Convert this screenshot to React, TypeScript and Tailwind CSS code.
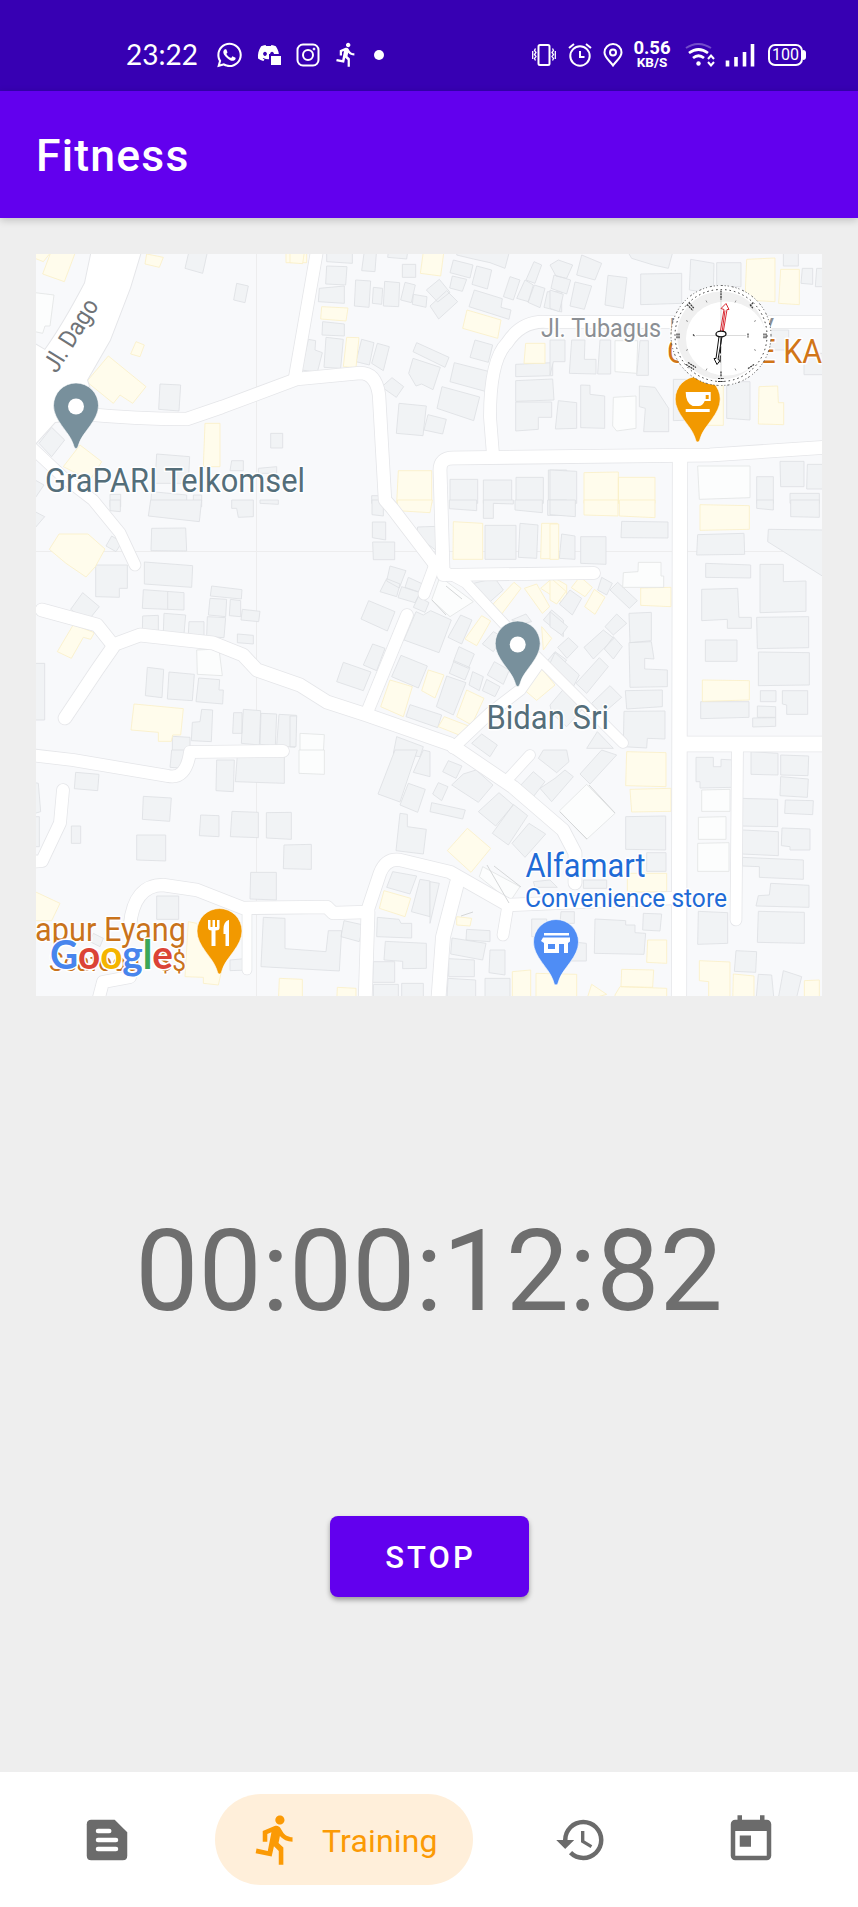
import React from "react";
import { FaWhatsapp, FaDiscord } from "react-icons/fa";
import { MdDirectionsRun, MdHistory, MdToday } from "react-icons/md";

type Tile = { x: number; y: number; gray: string; yellow: string; white?: string };

// Building footprints, grouped by map tile; tile units are a third of a pixel.
const tiles: Tile[] = [
  {
    x: 30, y: 250,
    gray: "M478 0L465 55L518 70L531 12V0Z M620 100L611 150L645 158L655 108Z M390 402L386 478L447 483L452 405Z M65 532L27 580L65 620L104 570Z M722 550H758V594H722Z M380 612L375 700H475L479 620Z M605 632L600 662H640V632Z M685 655L740 650V670H685Z M240 733H272V770H240Z M365 725L360 780H470V735Z M490 735H515V770H490Z M15 690L42 705L15 745Z",
    yellow: "M65 0L38 72L103 95L135 10V0Z M15 10H60L40 35L15 25Z M350 12L345 42L388 52L400 22Z M768 0V38H830V0Z M318 275L302 312L330 320L343 285Z M235 318L170 395L250 460L270 435L308 460L348 410Z M525 520H570V650H520Z M150 585L100 650L180 690L215 635Z",
    white: "M15 128L72 135L60 228H45L38 250L15 245Z",
  },
  {
    x: 290, y: 250,
    gray: "M110 0V35L187 40V0Z M110 48L107 102L167 105L171 50Z M88 115L85 155L163 160V108Z M98 215L96 255L163 258V222Z M55 268L35 360L82 367L97 308L75 300L77 272Z M108 262L102 352L152 355L160 268Z M215 268L198 335L238 345L252 278Z M262 280L245 340L280 362L298 290Z M197 90L193 168L237 172L242 93Z M250 112L247 160L275 163L278 115Z M284 94L280 168L326 170L329 98Z M345 97L332 150L364 158L376 105Z M370 133L367 163L408 172L411 140Z M337 43H377V82H337Z M222 10L215 62L255 65L259 10Z M295 5L293 22L350 27L353 5Z M448 88L409 120L443 156L480 127Z M470 122L420 168L446 207L503 155Z M490 30L480 68L540 84L549 45Z M487 78L479 114L517 124L530 88Z M560 48L546 103L592 117L605 60Z M553 120L537 170L657 208L663 180L633 172L637 146Z M555 270L540 322L595 337L608 285Z M380 278L369 305L465 352L477 322Z M369 325L356 370L378 408L395 402L429 419L451 352Z M493 338L480 395L600 428L610 368Z M456 410L441 475L551 512L569 441Z M306 383L275 411L319 442L341 410Z M327 460L319 550L399 557L409 468Z M414 494L402 540L458 552L469 508Z M660 80L640 140L670 150L690 90Z M705 90L680 145L715 155L730 105Z M732 35L708 90L735 100L755 45Z M733 105L714 157L750 173L765 115Z M772 125L762 172L815 186V125Z M505 0L500 15L550 27L600 38L645 55L657 10V0Z M677 343L788 338V377L677 380Z M677 392L788 387L792 450L677 454Z M677 456H785V502H745V538L677 543Z M480 688H563V760H480Z M580 690H665V760H580Z M678 682H760V760H678Z M245 737H280V760H245Z M775 660H830V750H775Z",
    yellow: "M0 0V38L38 41L44 0Z M95 170L92 207L168 213L174 174Z M170 262L160 350L198 353L207 263Z M400 5L391 70L452 78L461 10Z M531 180L518 235L623 265L633 210Z M707 280H765V340H702Z M325 662H425V760H320Z",
  },
  {
    x: 550, y: 250,
    gray: "M0 45L25 30L68 45L50 85L18 78Z M12 75L62 90L50 132L3 115Z M0 120L40 133L28 185L0 175Z M75 96L125 108L103 178L60 168Z M95 15L155 40L135 90L80 75Z M230 0H370L355 55L310 45L245 25Z M174 76L165 165L220 175L231 83Z M272 72L395 70V160L272 164Z M422 28L492 40L490 130L418 120Z M500 38H573V110H500Z M700 0V48H745V0Z M757 55H788V103L753 100Z M800 55H830V110H796Z M0 270H45V335H10L0 375Z M65 270H105L103 328H138V372L58 370Z M150 270H182V372H143Z M270 272H295V376H260Z M25 452L80 458V535L16 537Z M92 405L120 406V433L164 438V535L92 533Z M268 408L315 412L356 475V545H281L286 475L268 470Z M370 388H420L430 510L370 512Z M530 395H600V510L530 505Z M660 240H716V300H660Z M762 310H830V374H762Z M690 634H762V710H692Z M772 643H830V717H770Z M720 730H808V760H720Z M620 680H670V760H620Z M0 660L80 664V760H0Z",
    yellow: "M590 28L675 24V155L585 150Z M692 58H748V164L686 160Z M627 410L683 408L685 458H701V524L625 522Z M490 388H520V526H470Z M102 668L205 666V760H102Z M205 682H315V760H205Z",
    white: "M195 272H263L260 370L195 365Z M190 442L258 438V535L200 543L188 528Z M443 648H600V743L448 748Z",
  },
  {
    x: 30, y: 500,
    gray: "M362 0L355 48L508 65L515 0Z M240 0V32L271 35V0Z M605 0V25H620L625 52L670 50V0Z M690 0V10L745 13V0Z M245 108L228 138L258 155L276 127Z M365 85L467 84L470 153L363 152Z M197 195H292V265H268V292L197 290Z M343 186L488 197L485 262L343 252Z M340 269L462 278V330L337 325Z M413 275V327 M338 348L385 346V397L337 395Z M402 340L467 345L462 402L400 397Z M477 365H522V408L475 402Z M532 350L587 353L582 413L530 410Z M545 258L636 269L634 297L541 288Z M540 295L590 298L587 350L535 345Z M601 298L632 302V350L598 347Z M637 328L690 334L686 365L633 360Z M622 402L670 406V432L622 428Z M158 278L122 328L172 365L208 320Z M352 502L401 508L396 593L346 587Z M417 516L493 523L487 602L412 597Z M506 534L569 539L567 570H580L578 612L498 605Z M515 628L548 630L544 725L484 722L487 667L510 665Z M427 709L480 712V760H427Z M611 638H636V700H608Z M640 628L692 632L688 735L634 730Z M693 640L740 642L736 738L690 733Z M747 643L800 646L795 742L740 737Z M15 490H44V660H15Z M15 35L44 50L15 84Z",
    yellow: "M87 102H174L225 147L196 200L168 231L108 190L58 148Z M130 374L193 398L182 418L160 412L124 475L82 455Z M312 612L460 626L452 705H428L424 724H385V697L303 690Z",
    white: "M500 450L567 447L577 527L502 523Z",
  },
  {
    x: 290, y: 500,
    gray: "M246 0H280V48L246 44Z M247 66H287V120L247 113Z M248 126H314V179H250Z M383 81L443 79V155L380 107Z M478 0H560V32L478 26Z M580 0H670V12L610 10V55H580Z M675 0H757V38L675 30Z M585 76H678V178H585Z M690 70L744 75L740 175L685 172Z M773 0H830V46H773Z M300 198L348 212L328 264L290 243Z M290 236L330 252L320 290L270 275Z M355 232L398 252L385 275L345 262Z M335 260L390 278L375 308L324 293Z M385 290L417 308L405 337L370 322Z M236 302L315 335L292 393L213 357Z M248 432L285 445L260 512L220 495Z M160 487L243 516L220 572L140 545Z M378 335L400 345L422 332L484 360L447 458L342 420Z M333 466L412 498L385 564L305 530Z M512 345L546 360L515 432L474 412Z M507 440L553 462L535 505L490 485Z M492 482L540 503L525 540L478 520Z M548 515L580 530L568 572L537 555Z M590 538L630 560L615 590L577 572Z M470 528L528 548L490 645L439 620Z M360 614L455 645L443 683L348 650Z M610 395L640 412L610 455L577 432Z M613 485L658 510L640 553L592 525Z M550 250L615 235L640 270L597 308Z M665 360L708 342L725 365L700 370Z M785 330L820 360V410L760 360Z M795 455L830 480L800 515L770 485Z M575 702L622 735L600 770L545 730Z M320 710L400 740L390 770L310 760Z M0 648H20L18 740H0Z",
    yellow: "M322 0V32L420 38L427 0Z M490 65L578 70V178H489Z M755 70H802V176H752Z M575 347L602 363L560 437L525 417Z M415 510L462 525L435 594L395 572Z M300 540L367 560L340 650L272 620Z M530 570L582 595L545 675L500 650Z M463 650L551 684L540 718L445 680Z M672 247L693 265L635 342L602 320Z M740 252L779 320L757 340L703 265Z M790 232L830 255V315L752 265Z M750 500L795 555L740 601L695 563Z M755 380L785 415L760 450Z",
    white: "M450 230L550 305L480 350L425 300Z M30 700L103 704L100 760H30Z",
  },
  {
    x: 550, y: 500,
    gray: "M0 0H76V50L0 44Z M35 102L75 108V178L28 175Z M92 110H168V193L92 190Z M215 64L354 66V114L213 113Z M443 104L582 100L584 163L440 165Z M620 0H670V30L620 25Z M722 0H808V52L722 50Z M655 88L820 90V230L653 125Z M467 190L602 195V234L467 232Z M630 193H700V245L768 243V334L630 338Z M455 268L563 265L567 352H604V385H532V358L455 362Z M620 352L776 350V443L622 446Z M625 456L778 458V555L625 557Z M466 420H561V484H466Z M631 572H678V605H631Z M697 572H773V643H710V615L697 612Z M622 618L677 620V652H622Z M608 654L677 653V679L608 681Z M452 605H597V652L452 656Z M237 340L304 337V422L240 428Z M237 428L304 425L312 477L284 475V507L352 510V560L240 562Z M226 572L337 570V620L230 627Z M222 634L345 633V717L292 715L290 744L220 740Z M155 232L187 250L170 285L143 270Z M203 247L262 302L238 325L180 270Z M60 270L95 295L67 345L28 312Z M0 335L53 380L35 405L0 380Z M55 413L84 440L51 475L23 442Z M160 390L192 415L130 477L102 442Z M200 342L230 370L190 405L165 380Z M190 410L217 440L190 477L163 447Z M15 458L88 525L70 560L0 490Z M148 473L175 500L110 580L78 550Z M180 557L215 592L155 644L125 610Z M142 695L190 745H110Z M0 615L40 568L95 630L50 680L5 640Z",
    yellow: "M0 72H26V178H0Z M102 0V45L204 48V0Z M208 0V48L315 53V0Z M450 14L598 17V88L450 91Z M272 264L363 262V320L272 316Z M90 230L127 262L105 290L64 263Z M133 268L165 292L135 343L104 320Z M457 540L598 542V600L457 604Z M0 232L48 274L20 312L0 300Z",
    white: "M265 187H333V228H341V262H218L220 218L264 215Z",
  },
  {
    x: 30, y: 750,
    gray: "M425 0L420 52L467 55L475 0Z M137 67L207 73L203 122L133 116Z M340 139L424 144L419 214L337 208Z M512 195L567 197V260L508 257Z M606 184L685 187V263L601 260Z M709 188L784 187V268L709 264Z M320 255H407V333L320 330Z M762 285L844 283V358L760 356Z M662 367H739V450L660 447Z M560 30H613L610 125L558 122Z M622 15L763 20V100L616 95Z M124 228H152V280H124Z M380 438H446V508H380Z M700 502L765 505V596L888 605L895 542H935L928 663L693 650Z M942 512L1000 525L988 575L933 560Z M1095 0L1044 132L1110 156L1162 0Z M1135 100L1186 118L1163 187L1110 165Z M1110 190L1132 193V230L1189 238L1180 312L1098 302Z M1088 365L1160 378L1140 432L1070 412Z M1170 388L1200 393V500L1144 485Z M1042 502L1107 508L1113 520H1145V564L1040 560Z M1066 574L1189 580V655L1118 656V634L1062 630Z M1030 635H1094V697H1028Z M1030 703H1105V760H1030Z M1115 700H1180V760H1115Z M1180 0L1200 5V80L1150 67Z M15 98L25 100L32 185L15 190Z M15 200H28V290H15Z M190 550L220 565L210 590L180 575Z M600 630L655 625V660L600 662Z",
    yellow: "M15 425L90 460L65 512H15Z M500 520L540 620L574 665L565 705L520 700V682L465 680L475 515Z M1062 422L1142 445L1125 500L1048 475Z M748 685L817 688V760H745Z M922 712L978 715V760H920Z",
    white: "M807 0V70L883 73V0Z",
  },
  {
    x: 430, y: 750,
    gray: "M340 0H410L417 35L380 68L325 25Z M310 65L345 95L310 140L268 110Z M405 60L430 80L365 155L330 115L375 85Z M515 0L560 15L480 102L450 72Z M55 32L96 48L78 85L38 65Z M100 72L138 60L189 105L145 157L65 105Z M25 98L54 110L35 152L8 132Z M5 158L106 180L98 207L0 185Z M207 128L250 165L197 228L145 185Z M250 163L293 197L235 285L187 250Z M297 220L347 252L285 322L246 280Z M587 200L707 198V300L587 298Z M650 308H708V364H650Z M495 507L587 512V525H615V548L647 550L642 613L493 610Z M640 490L695 492L690 543L638 540Z M805 484L893 488V580L803 583Z M798 22H850V50H873V28L912 30L908 112L810 114V95H798Z M963 5L1044 10V75L963 73Z M1052 15L1136 18L1134 77L1052 75Z M1052 80L1135 87L1132 142L1050 137Z M930 145L1043 148V230L930 228Z M1066 150L1150 152L1148 194L1064 190Z M937 240L1045 245V317L935 312Z M1056 234L1140 237V300H1080V290L1054 287Z M937 322L1120 330V388L988 382V350L937 348Z M1022 400L1137 406V472L978 468L985 437L1018 435Z M985 484L1123 487V580L982 577Z M918 602L980 605L977 667L913 664Z M985 673L1025 675L1032 750H978Z M1060 662L1115 680L1098 750H1044Z M66 564L168 580L158 630L62 612Z M110 538L180 542V575L108 570Z M56 626L133 630V680H56Z M180 600H225V675L177 668Z M54 685L137 690V760H50Z M165 685H240V760H165Z M305 507H350V560H305Z M393 485H433V520H390Z M440 577L469 580V633H420Z M0 395L28 400L0 520Z M310 395L360 390L382 412H315Z M460 390H530V415H460Z",
    yellow: "M590 5L708 8V110L587 107Z M600 118L723 115V184L605 186Z M112 235L182 295L123 367L52 302Z M653 570H710V640L650 637Z M575 658L671 660L668 712L573 710Z M808 632L900 636V760H836V695L808 692Z M910 672L972 678V760H908Z M247 665L302 660V760H247Z M318 670L440 673V760H318Z M485 703L530 733L470 750Z M1123 692L1168 690V760H1123Z M592 370H710V425H592Z M555 735L570 710L710 715V750H555Z M80 500L125 505L120 528L80 525Z",
    white: "M470 103L555 190L470 268L388 183Z M815 120L900 118V184H815Z M805 202L888 200V268H805Z M803 280L897 278V364H803Z M158 350L270 410L240 455L148 380Z",
  },
];

// Street centre lines: [path, width].
const roads: [string, number][] = [
  ["M84 414Q135 419 187 419L222 407L297 379L360 373Q376 373 379 395L385 500L392 508L437 567", 12.5],
  ["M318 245L295 377", 12],
  ["M437 567L466 583L507 627L540 660L583 703L623 743", 10],
  ["M443 570L440 470Q440 458 453 458L710 455L830 447", 13],
  ["M493 455L490 417Q490 360 507 343Q522 320 547 322L830 322", 12],
  ["M443 575L594 573", 12],
  ["M434 567L424 594", 11],
  ["M407 615L368 710", 12],
  ["M42 610L97 625L113 645L140 635L213 643L243 655L257 670L300 685L327 702L367 715L450 744L513 787L563 830L575 853V883", 13],
  ["M113 647L97 670L65 718", 13],
  ["M30 446L63 477L93 500L120 533L135 565", 11],
  ["M453 748L490 713L520 690L539 663", 11],
  ["M680 460L679 1005", 14.5],
  ["M684 744L830 744", 15],
  ["M737.5 745L736 920", 11],
  ["M30 755L73 760L168 776Q186 780 190 752L283 751", 12],
  ["M63 790L60 823L42 861L28 862", 12],
  ["M130 925Q134 885 163 885L197 890L243 908L327 907L333 913L367 912L380 873Q386 858 400 860L450 872L508 905L675 898", 12.5],
  ["M368 912L365 1005", 13],
  ["M247 913L247 970", 9],
  ["M130 977L103 982L97 1005", 12],
  ["M457 883L443 937L438 1005", 14],
  ["M508 905L503 935", 11],
  ["M530 755L508 779", 10],
];

const DAGO = "M93 245L85 283Q63 325 45 350L28 340V446L36 443L55 422L95 418L96 408L87 380L110 340L130 288L143 245Z";

const GRAY = "#f1f3f5";

function Pin({ x, y, color, children }: { x: number; y: number; color: string; children: React.ReactNode }) {
  return (
    <g transform={`translate(${x} ${y})`}>
      <path d="M0 43C-1.6 43-2 41-3 38C-7 26-22.5 15-22.5 0A22.5 22.5 0 1 1 22.5 0C22.5 15 7 26 3 38C2 41 1.6 43 0 43Z" fill={color} stroke="#fff" strokeOpacity=".6" strokeWidth="1" />
      {children}
    </g>
  );
}

function Compass() {
  return (
    <g transform="translate(721 335.5)">
      <circle r="50" fill="#fff" />
      <circle r="44" fill="#f0f0f0" />
      <ellipse cx="5" cy="3" rx="40" ry="37" fill="#fff" />
      <circle r="50" fill="none" stroke="#555" strokeWidth="1" strokeDasharray="1 3 2 2 1 2" />
      <circle r="46" fill="none" stroke="#333" strokeWidth="1" strokeDasharray="1.5 3" />
      <path d="M-25 0H25M0-44V44" stroke="#ccc" strokeWidth=".7" />
      <path d="M0-45v9M0 36v5M-3 43H3M-3 46H3M-44-2v5M-42-2v5M43-2v5M45-2v5M-34-31l6 6M-32-33l5 6M29-31l3 4M32-33l-3 4M-35 29l8 5M-33 27l8 5M27 33l6-4M-28-1l2 2M27-2v4" fill="none" stroke="#333" strokeWidth="1.2" strokeDasharray="2 .7" />
      <path d="M-15-35l1 2M15-35l-1 2M-35-15l2 1M35-15l-2 1M-35 15l2-1M35 15l-2-1M-15 35l1-2M15 35l-1-2" stroke="#999" />
      <path d="M-1-2L3-26L0-27L5-32L8-26L6-26L2-2Z" fill="#fff" stroke="#d82c35" />
      <path d="M1-3L4-25" stroke="#d82c35" />
      <path d="M-2 1L-5 23L-7 23L-4 29L-1 25L-3 24L1 1Z" fill="#fff" stroke="#111" />
      <path d="M0 2L-1 29" stroke="#111" strokeDasharray="7 2" />
      <ellipse cy="-1.5" rx="5" ry="2.8" fill="#fff" stroke="#111" strokeWidth="1.3" />
    </g>
  );
}

function MapView() {
  const halo = { stroke: "#fff", strokeWidth: 3, strokeLinejoin: "round" as const, paintOrder: "stroke" };
  return (
    <svg viewBox="36 254 786 742" className="block h-[742px] w-[786px] font-[Roboto,sans-serif]">
      <rect x="36" y="254" width="786" height="742" fill="#f8f9fb" />
      <g stroke="#ededee" strokeWidth="1">
        <path d="M256.5 254V996M36 551.5H822" />
      </g>
      {tiles.map((t) => (
        <g key={`${t.x}-${t.y}`} transform={`translate(${t.x} ${t.y}) scale(.33333)`} strokeWidth="2.6">
          <path d={t.gray} fill={GRAY} stroke="#dfe1e4" />
          <path d={t.yellow} fill="#fffcec" stroke="#faf0c8" />
          {t.white && <path d={t.white} fill="#fcfdfd" stroke="#e3e5e6" />}
        </g>
      ))}
      <g fill="none" strokeLinecap="round" strokeLinejoin="round">
        <path d={DAGO} stroke="#e5e6e9" strokeWidth="2" />
        {roads.map(([d, w]) => (
          <path key={d} d={d} stroke="#e5e6e9" strokeWidth={w + 1.6} />
        ))}
        <path d={DAGO} fill="#fff" />
        {roads.map(([d, w]) => (
          <path key={d} d={d} stroke="#fff" strokeWidth={w} />
        ))}
      </g>
      <path d="M446 586L462 599M432 600L446 615M589 785L615 813M560 812L587 839M494 866L521 887M487 865L509 903M461 916L473 912" stroke="#d5d7d8" fill="none" />

      <text x="541" y="337" fontSize="25" fill="#8b8f94" {...halo}>
        <tspan textLength="120" lengthAdjust="spacingAndGlyphs">Jl. Tubagus</tspan>
        <tspan x="669" textLength="105" lengthAdjust="spacingAndGlyphs">Ismail IV</tspan>
      </text>
      <text transform="translate(56.500 374) rotate(-58)" fontSize="25" fill="#6f7377" textLength="81" lengthAdjust="spacingAndGlyphs" {...halo}>Jl. Dago</text>
      <text x="667" y="363" fontSize="32.5" fill="#d17518" textLength="155" lengthAdjust="spacingAndGlyphs" {...halo}>COFFEE KA</text>
      <text x="45" y="491.5" fontSize="33" fill="#546e7a" textLength="260" lengthAdjust="spacingAndGlyphs" {...halo}>GraPARI Telkomsel</text>
      <text x="486.5" y="728.5" fontSize="33" fill="#546e7a" textLength="122.5" lengthAdjust="spacingAndGlyphs" {...halo}>Bidan Sri</text>
      <text x="525.5" y="877" fontSize="33" fill="#1f6bd6" textLength="120" lengthAdjust="spacingAndGlyphs" {...halo}>Alfamart</text>
      <text x="525" y="906.5" fontSize="26" fill="#1f6bd6" textLength="202" lengthAdjust="spacingAndGlyphs" {...halo}>Convenience store</text>
      <text x="15" y="941" fontSize="32.5" fill="#c9731b" textLength="171" lengthAdjust="spacingAndGlyphs" {...halo}>Dapur Eyang</text>
      <text x="49" y="970.5" fontSize="25.5" fill="#c9731b" textLength="137" lengthAdjust="spacingAndGlyphs" {...halo}>Seafood · $$</text>

      <Pin x={76} y={405.5} color="#78909c"><circle r="8" cy="1" fill="#fff" /></Pin>
      <Pin x={517.7} y={643.5} color="#78909c"><circle r="8" cy="1" fill="#fff" /></Pin>
      <Pin x={697.7} y={399} color="#f29900">
        <path d="M-12-7H13V2H7Q5 7 1 7H-5Q-12 4-12-7ZM8-4V0H11V-4ZM-12 10H12V13H-12Z" fill="#fff" fillRule="evenodd" />
      </Pin>
      <Pin x={219.5} y={931} color="#f29900">
        <path d="M-11.5-11V-3Q-11-.5-8-.5V15H-4V-.5Q0-.5 0-3V-11H-2.5V-4H-4.5V-11H-7V-4H-9V-11ZM9-11Q4-9 4-2V3H6V15H9.500V-11Z" fill="#fff" />
      </Pin>
      <Pin x={556} y={942} color="#4f8df5">
        <path d="M-12-9H13V-6.500H-12ZM-13-4.500H14V-.5L12 1V11H8V2H3V11H-12V1L-15-1ZM-8 2V7H-1V2Z" fill="#fff" fillRule="evenodd" />
      </Pin>
      <text x="50" y="969" fontSize="40" fontWeight="700" className="font-[Lato,sans-serif]" textLength="123" lengthAdjust="spacingAndGlyphs" {...halo}>
        <tspan fill="#4885ed">G</tspan><tspan fill="#db4437">o</tspan><tspan fill="#f4b400">o</tspan><tspan fill="#4885ed">g</tspan><tspan fill="#3ba757">l</tspan><tspan fill="#db4437">e</tspan>
      </text>
      <Compass />
    </svg>
  );
}

function InstagramGlyph() {
  return (
    <svg viewBox="0 0 24 24" className="ml-[15px] h-6 w-6" fill="none" stroke="currentColor" strokeWidth="2">
      <rect x="1.500" y="1.500" width="21" height="21" rx="5.500" /><circle cx="12" cy="12" r="5" /><circle cx="18" cy="6" r="1" fill="currentColor" strokeWidth=".8" />
    </svg>
  );
}

function DiscordGlyph() {
  return (
    <span className="relative ml-[13px] h-6 w-6">
      <FaDiscord className="h-6 w-[23px] -translate-y-[2px]" />
      <span className="absolute top-[11px] left-[12px] h-[11px] w-[12px] border-2 border-r-0 border-b-0 border-[#3700b3] bg-white" />
    </span>
  );
}

function StatusBar() {
  return (
    <div className="flex h-[91px] shrink-0 items-start bg-[#3700b3] pt-[35px] text-white">
      <div className="flex h-10 w-full items-center pb-[1px]">
        <span className="ml-[126px] w-[73px] translate-y-[-1px] font-[Lato,sans-serif] text-[28px] leading-none whitespace-nowrap">23:22</span>
        <FaWhatsapp className="ml-[16px] h-[28px] w-[29px]" />
        <DiscordGlyph />
        <InstagramGlyph />
        <MdDirectionsRun className="ml-[13px] h-[27px] w-[27px]" />
        <span className="ml-[14px] h-[10px] w-[10px] rounded-full bg-white" />

        <svg viewBox="0 0 24 22" className="ml-[148px] h-[22px] w-6" fill="none" stroke="currentColor" strokeWidth="2">
          <rect x="6.500" y="1" width="11" height="20" rx="1.500" />
          <path d="M3.500 4.500l-1 2 1.500 2-1.500 2 1.500 2-1.500 2 1 2M.7 7v8M20.500 4.500l1 2-1.500 2 1.500 2-1.500 2 1.500 2-1 2M23.300 7v8" strokeWidth="1.300" />
        </svg>
        <svg viewBox="0 0 24 24" className="ml-[12px] h-6 w-6" fill="none" stroke="currentColor" strokeWidth="2">
          <circle cx="12" cy="13" r="9.700" /><path d="M12 8v6h4.500M1 5l5-4M23 5l-5-4" />
        </svg>
        <svg viewBox="0 0 20 24" className="ml-[11px] h-6 w-5" fill="none" stroke="currentColor" strokeWidth="2">
          <path d="M10 22.500C7 18 1.500 14.500 1.500 9.500a8.500 8.500 0 0 1 17 0C18.500 14.500 13 18 10 22.500Z" /><circle cx="10" cy="9.500" r="3" />
        </svg>
        <span className="ml-[9px] flex w-[40px] flex-col items-center font-[Roboto,sans-serif] font-bold">
          <span className="text-[18.500px] leading-[15px]">0.56</span>
          <span className="text-[13.500px] leading-[13px]">KB/S</span>
        </span>
        <svg viewBox="0 0 31 24" className="ml-[13px] h-6 w-[31px]" fill="none" stroke="currentColor" strokeWidth="2.700">
          <path d="M1 5Q13-3 26 5" strokeOpacity=".3" strokeWidth="2" />
          <path d="M4 10Q13.500 3 23 10M8 15Q13.500 10.500 19 15" />
          <circle cx="13.500" cy="20.500" r="2.200" fill="currentColor" stroke="none" />
          <path d="M23 16L26 12.500L29 16M23 19L26 22.500L29 19" strokeWidth="2" />
        </svg>
        <svg viewBox="0 0 30 24" className="ml-[9px] h-6 w-[30px]" fill="none" stroke="currentColor" strokeWidth="3.600">
          <path d="M2.500 17.500V23.500M11 14V23.500M19.500 9V23.500M27.500 1V23.500" />
        </svg>
        <span className="ml-[13px] flex h-[22px] w-[35px] items-center justify-center rounded-[7px] border-2 border-white font-[Roboto,sans-serif] text-[16px] leading-none">100</span>
        <span className="h-[10px] w-[3px] rounded-r-full bg-white" />
      </div>
    </div>
  );
}

function BottomNav() {
  return (
    <nav className="flex h-[135px] shrink-0 items-center bg-white text-[#6b6b6b]">
      <svg viewBox="0 0 24 24" className="ml-[80px] h-[54px] w-[54px]" fill="currentColor">
        <path d="M5 3H15.400L21 8.600V19Q21 21 19 21H5Q3 21 3 19V5Q3 3 5 3Z" />
        <path d="M8 8H13M8 12H16M8 16H16" stroke="#fff" strokeWidth="2" strokeLinecap="round" />
      </svg>
      <button className="ml-[81px] flex h-[91px] w-[258px] items-center rounded-full bg-[#ffefda] pl-[34px] text-[#fb9a05]">
        <MdDirectionsRun className="h-[55px] w-[55px]" />
        <span className="mt-[2px] ml-[18px] text-[32px] leading-none tracking-[0.15px]">Training</span>
      </button>
      <MdHistory className="ml-[81px] h-[54px] w-[54px]" />
      <MdToday className="ml-[116px] h-[54px] w-[54px]" />
    </nav>
  );
}

export default function App() {
  return (
    <div className="flex h-[1907px] w-[858px] flex-col overflow-hidden bg-[#eeeeee] font-[Roboto,sans-serif]">
      <StatusBar />
      <header className="flex h-[127px] shrink-0 items-center bg-[#6200ee] pl-[36px] text-[44.500px] font-medium tracking-[1.200px] text-white shadow-[0_2px_8px_rgba(0,0,0,0.2)]">
        <h1 className="pt-[4px]">Fitness</h1>
      </header>
      <main className="flex flex-1 flex-col items-center pt-[36px]">
        <MapView />
        <div className="mt-[219px] text-[112.500px] leading-[114px] whitespace-nowrap text-[#6e6e6e]">00:00:12:82</div>
        <button className="mt-[187px] flex h-[81px] w-[199px] items-center justify-center rounded-[8px] bg-[#6200ee] pt-[4px] pl-[3px] text-[31px] font-medium tracking-[3px] text-white shadow-[0_3px_5px_rgba(0,0,0,0.35)]">STOP</button>
      </main>
      <BottomNav />
    </div>
  );
}
